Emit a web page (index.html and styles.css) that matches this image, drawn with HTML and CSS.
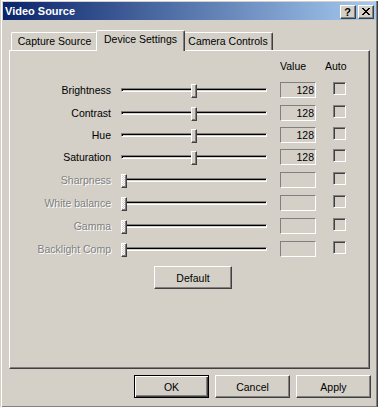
FILE: index.html
```html
<!DOCTYPE html>
<html>
<head>
<meta charset="utf-8">
<link rel="stylesheet" href="styles.css">
</head>
<body>
<div class="window">
  <div class="titlebar">
    <span class="title">Video Source</span>
    <div class="tbtns">
      <span class="tbtn help">?</span>
      <span class="tbtn close">
        <svg width="8" height="7" viewBox="0 0 8 7" shape-rendering="crispEdges"><path d="M0 0h2v1H0zM6 0h2v1H6zM1 1h2v1H1zM5 1h2v1H5zM2 2h4v1H2zM3 3h2v1H3zM2 4h4v1H2zM1 5h2v1H1zM5 5h2v1H5zM0 6h2v1H0zM6 6h2v1H6z" fill="#000"/></svg>
      </span>
    </div>
  </div>
  <div class="content">
    <div class="tabs">
      <div class="tab tab-cs">Capture Source</div>
      <div class="tab tab-ds active">Device Settings</div>
      <div class="tab tab-cc">Camera Controls</div>
    </div>
    <div class="panel">
      <div class="grid">
        <div class="hdr hdr-value">Value</div>
        <div class="hdr hdr-auto">Auto</div>

        <div class="lbl r1">Brightness</div>
        <div class="slider r1"><div class="track"></div><div class="thumb" style="left:70px"></div></div>
        <div class="val r1">128</div>
        <div class="chk r1"></div>

        <div class="lbl r2">Contrast</div>
        <div class="slider r2"><div class="track"></div><div class="thumb" style="left:70px"></div></div>
        <div class="val r2">128</div>
        <div class="chk r2"></div>

        <div class="lbl r3">Hue</div>
        <div class="slider r3"><div class="track"></div><div class="thumb" style="left:70px"></div></div>
        <div class="val r3">128</div>
        <div class="chk r3"></div>

        <div class="lbl r4">Saturation</div>
        <div class="slider r4"><div class="track"></div><div class="thumb" style="left:70px"></div></div>
        <div class="val r4">128</div>
        <div class="chk r4"></div>

        <div class="lbl dis r5">Sharpness</div>
        <div class="slider r5"><div class="track"></div><div class="thumb off" style="left:0px"></div></div>
        <div class="val r5"></div>
        <div class="chk r5"></div>

        <div class="lbl dis r6">White balance</div>
        <div class="slider r6"><div class="track"></div><div class="thumb off" style="left:0px"></div></div>
        <div class="val r6"></div>
        <div class="chk r6"></div>

        <div class="lbl dis r7">Gamma</div>
        <div class="slider r7"><div class="track"></div><div class="thumb off" style="left:0px"></div></div>
        <div class="val r7"></div>
        <div class="chk r7"></div>

        <div class="lbl dis r8">Backlight Comp</div>
        <div class="slider r8"><div class="track"></div><div class="thumb off" style="left:0px"></div></div>
        <div class="val r8"></div>
        <div class="chk r8"></div>

        <div class="btn btn-default">Default</div>
      </div>
    </div>
    <div class="buttons">
      <div class="btn btn-ok">OK</div>
      <div class="btn">Cancel</div>
      <div class="btn">Apply</div>
    </div>
  </div>
</div>
</body>
</html>
```
FILE: styles.css
```css
html, body {
  margin: 0;
  padding: 0;
  background: #d4d0c8;
}

.window {
  box-sizing: border-box;
  width: 378px;
  height: 407px;
  padding: 2px 2px 0 3px;
  background: #d4d0c8;
  font-family: "Liberation Sans", Arial, sans-serif;
  font-size: 10.5px;
  color: #000;
  box-shadow: inset 1px 0 #d4d0c8, inset 2px 0 #fff, inset 0 1px #fff,
              inset -1px 0 #404040, inset -2px 0 #808080, inset 0 -1px #808080;
  overflow: hidden;
}

.titlebar {
  height: 18px;
  display: flex;
  align-items: center;
  justify-content: space-between;
  background: linear-gradient(to right, #0a246a, #a6caf0);
}

.title {
  color: #fff;
  font-weight: bold;
  font-size: 11px;
  padding-left: 2px;
  line-height: 18px;
}

.tbtns {
  display: flex;
  gap: 2px;
  margin-right: 2px;
  margin-top: 1px;
}

.tbtn {
  box-sizing: border-box;
  width: 16px;
  height: 14px;
  background: #d4d0c8;
  border-top: 1px solid #fff;
  border-left: 1px solid #fff;
  border-right: 1px solid #404040;
  border-bottom: 1px solid #404040;
  box-shadow: inset -1px -1px #808080;
  display: flex;
  align-items: center;
  justify-content: center;
}

.help {
  font-weight: bold;
  font-size: 11px;
  line-height: 12px;
  padding-right: 1px;
}

.close svg {
  display: block;
  margin-right: 1px;
}

.content {
  padding-left: 6px;
}

.tabs {
  margin-top: 10px;
  height: 20px;
  display: flex;
  align-items: flex-end;
  padding-left: 2px;
}

.tab {
  box-sizing: border-box;
  height: 18px;
  line-height: 17px;
  text-align: center;
  background: #d4d0c8;
  border-top: 1px solid #fff;
  border-left: 1px solid #fff;
  border-right: 1px solid #404040;
  box-shadow: inset -1px 0 #808080;
  border-radius: 2px 2px 0 0;
  white-space: nowrap;
}

.tab-cs { width: 87px; }
.tab-ds { width: 85px; }
.tab-cc { width: 90px; }

.tab.active {
  position: relative;
  z-index: 1;
  width: 89px;
  height: 21px;
  margin: 0 -2px -1px -2px;
  padding-bottom: 3px;
}

.panel {
  box-sizing: border-box;
  width: 361px;
  height: 319px;
  border-top: 1px solid #fff;
  border-left: 1px solid #fff;
  border-right: 1px solid #404040;
  border-bottom: 1px solid #404040;
  box-shadow: inset -1px -1px #808080;
  padding-top: 7px;
}

.grid {
  display: grid;
  grid-template-columns: 111px 159px 53px 13px;
  grid-template-rows: 24px 23px 22px 22px 23px 23px 23px 23px 23px auto;
  align-items: start;
}

.hdr {
  line-height: 16px;
  white-space: nowrap;
}
.hdr-value { grid-column: 3; grid-row: 1; }
.hdr-auto { grid-column: 4; grid-row: 1; margin-left: -8px; }

.r1 { grid-row: 2; }
.r2 { grid-row: 3; }
.r3 { grid-row: 4; }
.r4 { grid-row: 5; }
.r5 { grid-row: 6; }
.r6 { grid-row: 7; }
.r7 { grid-row: 8; }
.r8 { grid-row: 9; }

.lbl {
  grid-column: 1;
  text-align: right;
  padding-right: 10px;
  line-height: 16px;
  white-space: nowrap;
}

.lbl.dis {
  color: #808080;
  text-shadow: 1px 1px 0 #fff;
}

.slider {
  grid-column: 2;
  position: relative;
  width: 146px;
  height: 16px;
}

.track {
  box-sizing: border-box;
  margin-top: 6px;
  height: 4px;
  border-top: 1px solid #808080;
  border-left: 1px solid #808080;
  border-right: 1px solid #fff;
  border-bottom: 1px solid #fff;
  box-shadow: inset 1px 1px #000;
}

.thumb {
  position: absolute;
  top: 2px;
  box-sizing: border-box;
  width: 6px;
  height: 14px;
  background: #d4d0c8;
  border-top: 1px solid #fff;
  border-left: 1px solid #fff;
  border-right: 1px solid #404040;
  border-bottom: 1px solid #404040;
  box-shadow: inset -1px -1px #808080;
}

.thumb.off {
  background: repeating-conic-gradient(#fff 0 25%, #d4d0c8 0 50%) 0 0 / 2px 2px;
}

.val {
  grid-column: 3;
  box-sizing: border-box;
  width: 36px;
  height: 16px;
  border-top: 1px solid #808080;
  border-left: 1px solid #808080;
  border-right: 1px solid #fff;
  border-bottom: 1px solid #fff;
  text-align: right;
  padding-right: 1px;
  line-height: 14px;
}

.chk {
  grid-column: 4;
  box-sizing: border-box;
  width: 13px;
  height: 13px;
  border-top: 1px solid #808080;
  border-left: 1px solid #808080;
  border-right: 1px solid #fff;
  border-bottom: 1px solid #fff;
  box-shadow: inset 1px 1px #404040;
}

.btn {
  box-sizing: border-box;
  width: 75px;
  height: 23px;
  background: #d4d0c8;
  border-top: 1px solid #fff;
  border-left: 1px solid #fff;
  border-right: 1px solid #404040;
  border-bottom: 1px solid #404040;
  box-shadow: inset -1px -1px #808080;
  display: flex;
  align-items: center;
  justify-content: center;
}

.btn-default {
  grid-column: 2;
  grid-row: 10;
  width: 78px;
  margin-top: 2px;
  margin-left: 33px;
}

.btn-ok {
  border: 1px solid #000;
  box-shadow: inset 1px 1px #fff, inset -1px -1px #404040, inset -2px -2px #808080;
}

.buttons {
  margin-top: 6px;
  margin-right: 5px;
  display: flex;
  justify-content: flex-end;
  gap: 6px;
}
```
